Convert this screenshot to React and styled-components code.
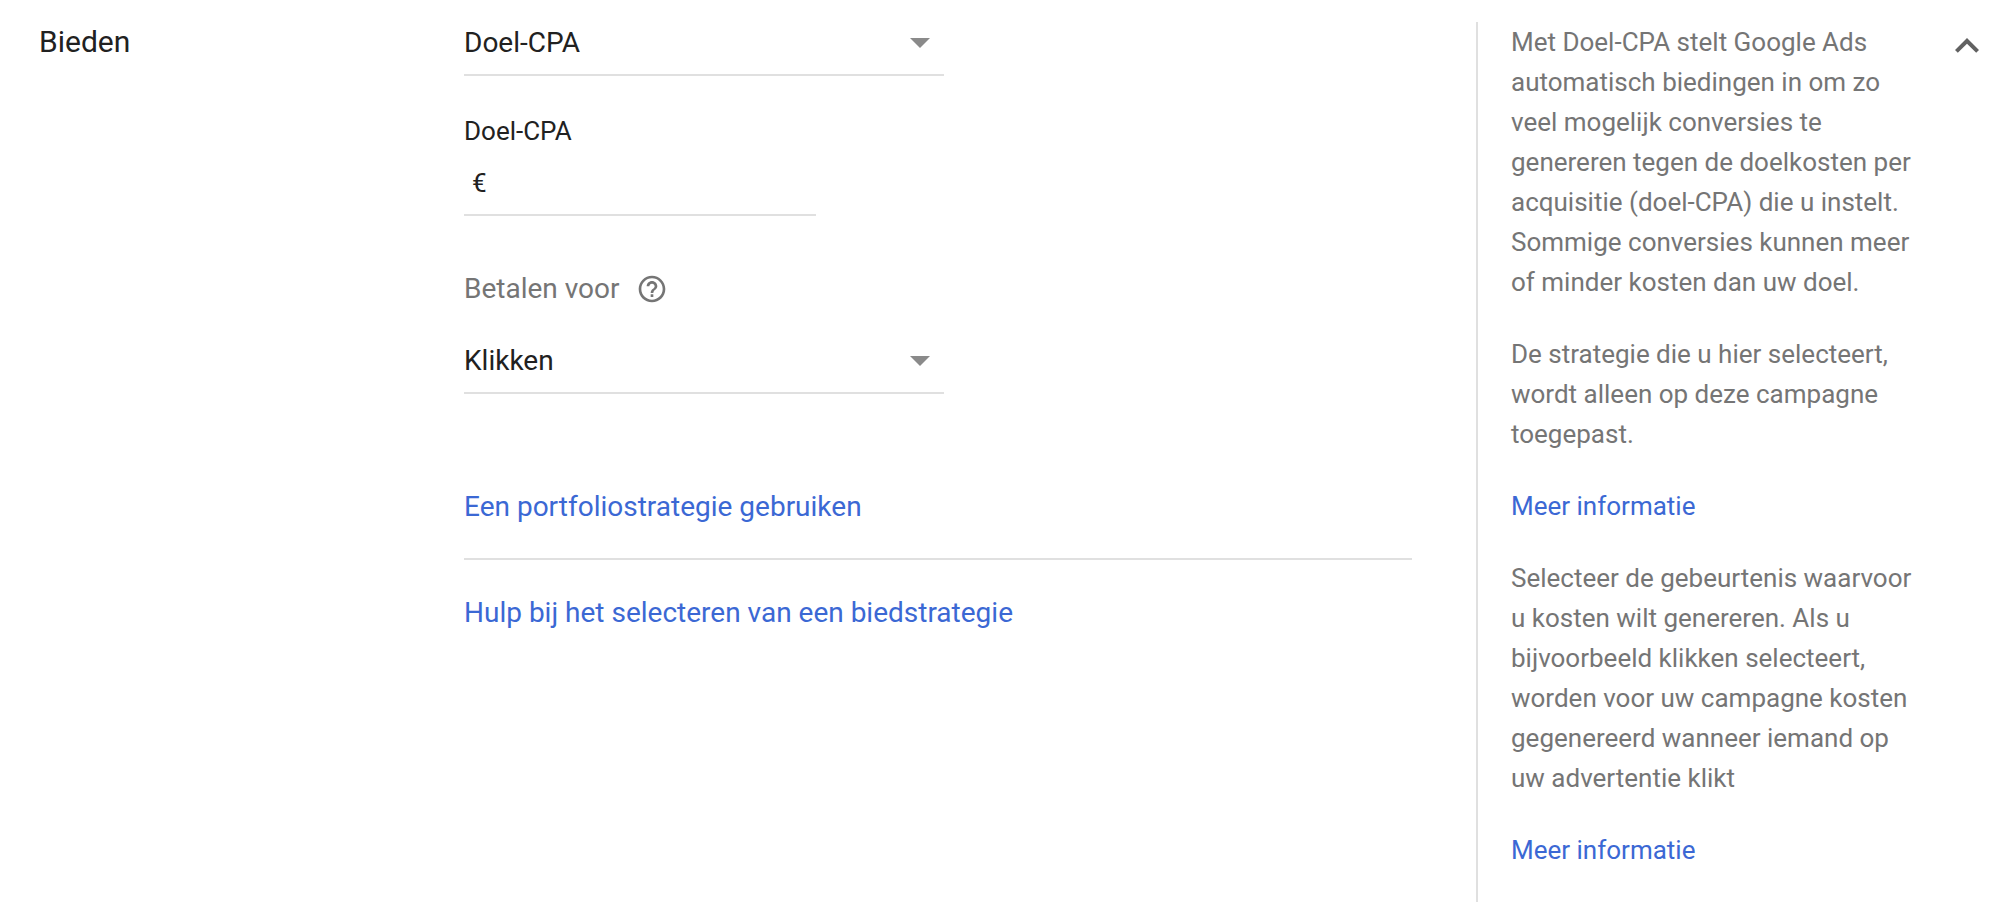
import React, { useState } from 'react';
import styled, { createGlobalStyle } from 'styled-components';
import { MdHelpOutline, MdExpandLess } from 'react-icons/md';

const GlobalStyle = createGlobalStyle`
  * {
    box-sizing: border-box;
  }

  body {
    margin: 0;
    background: #ffffff;
    color: #212121;
    font-family: Roboto, "Liberation Sans", sans-serif;
  }
`;

const Section = styled.section`
  display: grid;
  grid-template-columns: 425px minmax(0, 1fr) 467px 48px;
  padding: 22px 17px 10px 39px;
`;

const Title = styled.h2`
  margin: 0;
  font-size: 30px;
  font-weight: 400;
  line-height: 40px;
`;

const Settings = styled.div`
  display: flex;
  flex-direction: column;
  align-items: flex-start;
  margin-right: 64px;
`;

const SelectField = styled.div`
  display: flex;
  align-items: center;
  width: 100%;
  max-width: 480px;
  border-bottom: 2px solid #e0e0e0;
`;

const Select = styled.select`
  flex: 1;
  height: 52px;
  margin-right: -34px;
  padding: 0 34px 12px 0;
  border: 0;
  outline: 0;
  appearance: none;
  background: transparent;
  color: inherit;
  font: inherit;
  font-size: 28px;
  cursor: pointer;
`;

const Arrow = styled.svg`
  width: 20px;
  height: 10px;
  margin: 0 14px 10px 0;
  fill: #8a8a8a;
  pointer-events: none;
`;

const AmountField = styled.div`
  width: 100%;
  max-width: 352px;
  margin: 39px 0 55px;
`;

const AmountLabel = styled.label`
  display: block;
  font-size: 26px;
  line-height: 32px;
`;

const AmountRow = styled.div`
  display: flex;
  align-items: center;
  gap: 8px;
  height: 69px;
  padding: 4px 8px 0;
  border-bottom: 2px solid #e0e0e0;
  font-size: 26px;
`;

const AmountInput = styled.input`
  flex: 1;
  min-width: 0;
  padding: 0;
  border: 0;
  outline: 0;
  background: transparent;
  color: inherit;
  font: inherit;
`;

const PayForRow = styled.div`
  display: flex;
  align-items: center;
  gap: 16px;
  margin-bottom: 33px;
  color: #757575;
  font-size: 28px;
  line-height: 36px;
`;

const IconButton = styled.button`
  display: flex;
  align-self: ${({ $top }) => ($top ? 'start' : 'center')};
  padding: 0;
  border: 0;
  background: none;
  color: ${({ $top }) => ($top ? '#616161' : '#757575')};
  font-size: ${({ $top }) => ($top ? '48px' : '32px')};
  cursor: pointer;
`;

const Link = styled.a`
  color: #3b68d4;
  text-decoration: none;
`;

const StrategyLinks = styled.div`
  width: 100%;
  margin-top: 95px;
  font-size: 28px;
  line-height: 36px;
`;

const Divider = styled.hr`
  height: 2px;
  margin: 33px 0 35px;
  border: 0;
  background: #e0e0e0;
`;

const Help = styled.aside`
  padding: 0 22px 0 33px;
  border-left: 2px solid #e0e0e0;
  color: #757575;
  font-size: 26px;
  line-height: 40px;
`;

const HelpText = styled.p`
  margin: 0 0 32px;
`;

const Dropdown = ({ label, options, ...props }) => (
  <SelectField>
    <Select aria-label={label} {...props}>
      {options.map((option) => (
        <option key={option}>{option}</option>
      ))}
    </Select>
    <Arrow viewBox="0 0 20 10" aria-hidden="true">
      <path d="M0 0h20L10 10z" />
    </Arrow>
  </SelectField>
);

const App = () => {
  const [amount, setAmount] = useState('');

  return (
    <>
      <GlobalStyle />
      <Section>
        <Title>Bieden</Title>
        <Settings>
          <Dropdown label="Biedstrategie" options={['Doel-CPA']} />
          <AmountField>
            <AmountLabel htmlFor="target-cpa">Doel-CPA</AmountLabel>
            <AmountRow>
              <span>€</span>
              <AmountInput
                id="target-cpa"
                type="text"
                inputMode="decimal"
                value={amount}
                onChange={(e) => setAmount(e.target.value)}
              />
            </AmountRow>
          </AmountField>
          <PayForRow>
            <label htmlFor="pay-for">Betalen voor</label>
            <IconButton type="button" aria-label="Help">
              <MdHelpOutline />
            </IconButton>
          </PayForRow>
          <Dropdown id="pay-for" options={['Klikken']} />
          <StrategyLinks>
            <Link href="#portfolio">Een portfoliostrategie gebruiken</Link>
            <Divider />
            <Link href="#help">Hulp bij het selecteren van een biedstrategie</Link>
          </StrategyLinks>
        </Settings>
        <Help>
          <HelpText>
            Met Doel-CPA stelt Google Ads automatisch biedingen in om zo veel mogelijk
            conversies te genereren tegen de doelkosten per acquisitie (doel-CPA) die u
            instelt. Sommige conversies kunnen meer of minder kosten dan uw doel.
          </HelpText>
          <HelpText>
            De strategie die u hier selecteert, wordt alleen op deze campagne toegepast.
          </HelpText>
          <HelpText>
            <Link href="#bidding">Meer informatie</Link>
          </HelpText>
          <HelpText>
            Selecteer de gebeurtenis waarvoor u kosten wilt genereren. Als u bijvoorbeeld
            klikken selecteert, worden voor uw campagne kosten gegenereerd wanneer iemand
            op uw advertentie klikt
          </HelpText>
          <HelpText>
            <Link href="#pay-for-info">Meer informatie</Link>
          </HelpText>
        </Help>
        <IconButton type="button" aria-label="Samenvouwen" $top>
          <MdExpandLess />
        </IconButton>
      </Section>
    </>
  );
};

export default App;
